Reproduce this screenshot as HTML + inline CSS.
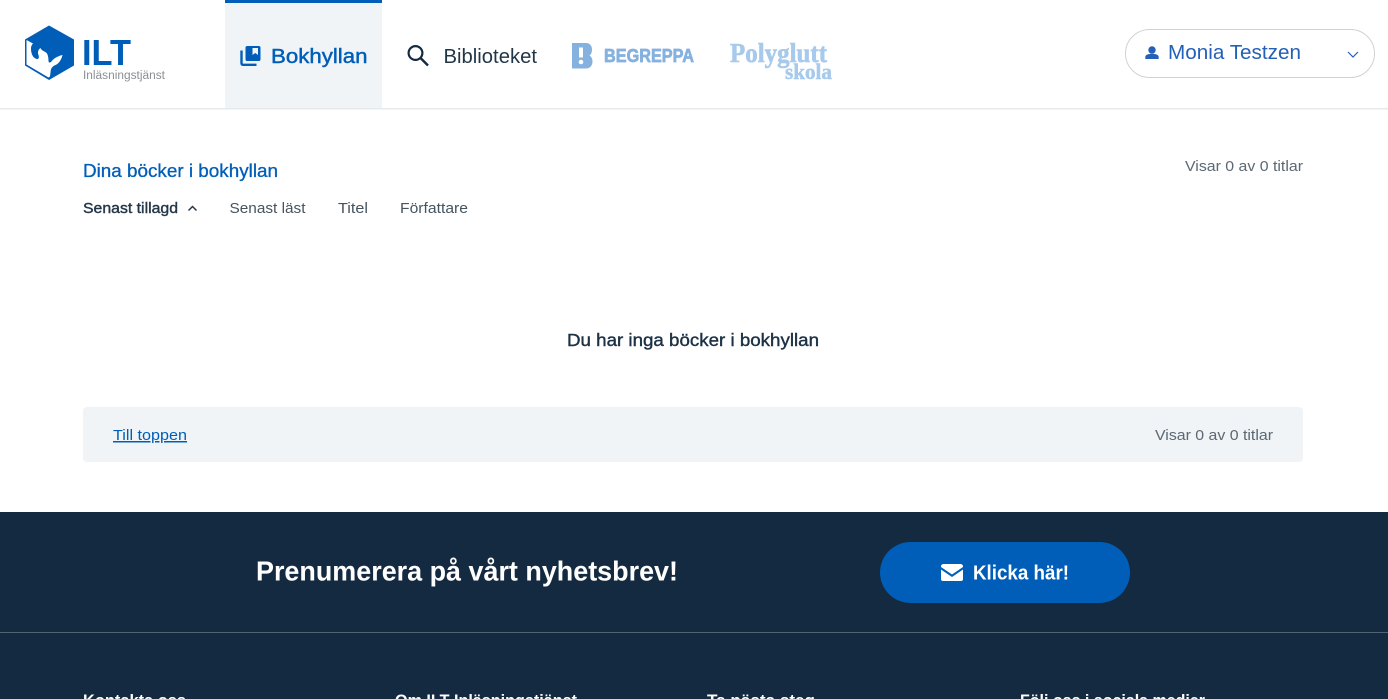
<!DOCTYPE html>
<html lang="sv">
<head>
<meta charset="utf-8">
<title>Bokhyllan</title>
<style>
html,body{margin:0;padding:0;background:#fff;width:1388px;height:699px;overflow:hidden}
svg{display:block;position:absolute;left:0;top:0}
text{font-family:"Liberation Sans",sans-serif}
.b{font-weight:700}
</style>
</head>
<body>
<svg width="1388" height="699" viewBox="0 0 1388 699" xmlns="http://www.w3.org/2000/svg">
<rect width="1388" height="699" fill="#fff"/>

<!-- header -->
<rect x="0" y="108" width="1388" height="1.5" fill="#e6e9ec"/>
<rect x="225" y="0" width="157" height="108" fill="#f0f4f7"/>
<rect x="225" y="0" width="157" height="3" fill="#005eb8"/>

<!-- logo -->
<path d="M49 25.500 74 39.500V65.500L49 80 25 65.500V39.500Z" fill="#005eb8"/>
<path d="M26.500 40 33 43.500 C31.500 45 30.800 47 31 49.500 C31.300 54.500 33.500 58.500 37 59 C39 59.300 39.300 57 38.300 54.500 C37.500 52 38.300 49.500 40.500 48 C41.500 50.500 43.500 50.800 46 52.500 C48 54 48.500 58 48.500 61 C48.500 62.500 49.500 63 51 62 C54 58 58 56 62.500 55 C61.500 59.500 59 63.500 55.500 65 C53 66 51.500 67.500 50.800 70 L50 76.500 L48.500 77.500 L26.500 64.500 Z" fill="#fff"/>
<text x="82" y="65" class="b" font-size="36" fill="#005eb8" textLength="49" lengthAdjust="spacingAndGlyphs">ILT</text>
<text x="83" y="79" font-size="11.500" fill="#8a8f94" textLength="82" lengthAdjust="spacingAndGlyphs">Inläsningstjänst</text>

<!-- bokhyllan -->
<rect x="245.500" y="46" width="15" height="15" rx="1.800" fill="#005eb8"/>
<path d="M252.500 48H258V55L255.250 53L252.500 55Z" fill="#f0f4f7"/>
<path d="M241.500 50.500V63.300A1.500 1.500 0 0 0 243 64.800H256.500" fill="none" stroke="#005eb8" stroke-width="2.400"/>
<text x="271" y="63" font-size="20" fill="#005eb8" stroke="#005eb8" stroke-width=".45" textLength="96.500" lengthAdjust="spacingAndGlyphs">Bokhyllan</text>

<!-- biblioteket -->
<circle cx="415.500" cy="53" r="6.900" fill="none" stroke="#142a40" stroke-width="2.200"/>
<path d="M420.500 58 428 65.500" fill="none" stroke="#142a40" stroke-width="2.400"/>
<text x="443.500" y="63" font-size="20" fill="#233648" textLength="93.500" lengthAdjust="spacingAndGlyphs">Biblioteket</text>

<!-- begreppa -->
<path d="M572 43H586C590 43 592 46 592 49.500C592 52.500 591 54.500 589.500 55.500C591.500 56.800 592.500 59 592.500 61.500C592.500 65.500 590 68.500 586 68.500H572Z" fill="#85b1df"/>
<rect x="579" y="47.500" width="4" height="10" fill="#fff"/>
<circle cx="581" cy="62" r="2.300" fill="#fff"/>
<text x="604" y="62" class="b" font-size="18" fill="#85b1df" stroke="#85b1df" stroke-width=".7" textLength="90" lengthAdjust="spacingAndGlyphs">BEGREPPA</text>

<!-- polyglutt -->
<text x="730" y="62" font-size="27" font-weight="700" fill="#a7caec" stroke="#a7caec" stroke-width=".6" textLength="97" lengthAdjust="spacingAndGlyphs" style="font-family:'Liberation Serif',serif">Polyglutt</text>
<text x="785" y="79" font-size="22" font-weight="700" fill="#a7caec" stroke="#a7caec" stroke-width=".5" textLength="47" lengthAdjust="spacingAndGlyphs" style="font-family:'Liberation Serif',serif">skola</text>

<!-- user pill -->
<rect x="1125.500" y="29.500" width="249" height="48" rx="24" fill="#fff" stroke="#cfd2d4"/>
<circle cx="1152" cy="50" r="3.700" fill="#2560b8"/>
<path d="M1145.300 59V57C1145.300 54.800 1148 53.900 1152 53.900C1156 53.900 1158.700 54.800 1158.700 57V59Z" fill="#2560b8"/>
<text x="1168" y="59" font-size="20" fill="#2560b8" textLength="133" lengthAdjust="spacingAndGlyphs">Monia Testzen</text>
<path d="M1348 52 1353 57 1358 52" fill="none" stroke="#2560b8" stroke-width="1.200"/>

<!-- content -->
<text x="83" y="177" font-size="18" fill="#005eb8" stroke="#005eb8" stroke-width=".3" textLength="195" lengthAdjust="spacingAndGlyphs">Dina böcker i bokhyllan</text>
<text x="1185" y="171" font-size="15" fill="#5c6873" textLength="118" lengthAdjust="spacingAndGlyphs">Visar 0 av 0 titlar</text>

<text x="83" y="213" font-size="15" fill="#233648" stroke="#233648" stroke-width=".4" textLength="95" lengthAdjust="spacingAndGlyphs">Senast tillagd</text>
<path d="M188.500 210.500 192.500 206.500 196.500 210.500" fill="none" stroke="#233648" stroke-width="1.500"/>
<text x="229.500" y="213" font-size="15" fill="#46545f" textLength="76" lengthAdjust="spacingAndGlyphs">Senast läst</text>
<text x="338" y="213" font-size="15" fill="#46545f" textLength="30" lengthAdjust="spacingAndGlyphs">Titel</text>
<text x="400" y="213" font-size="15" fill="#46545f" textLength="68" lengthAdjust="spacingAndGlyphs">Författare</text>

<text x="567" y="346" font-size="17.500" fill="#1c3145" stroke="#1c3145" stroke-width=".4" textLength="252" lengthAdjust="spacingAndGlyphs">Du har inga böcker i bokhyllan</text>

<rect x="83" y="407" width="1220" height="55" rx="4" fill="#f0f4f7"/>
<text x="113" y="440" font-size="15" fill="#005eb8" text-decoration="underline" textLength="74" lengthAdjust="spacingAndGlyphs">Till toppen</text>
<text x="1155" y="440" font-size="15" fill="#5c6873" textLength="118" lengthAdjust="spacingAndGlyphs">Visar 0 av 0 titlar</text>

<!-- footer -->
<rect x="0" y="512" width="1388" height="187" fill="#142a40"/>
<text x="256" y="580.500" class="b" font-size="28" fill="#fff" textLength="422" lengthAdjust="spacingAndGlyphs">Prenumerera på vårt nyhetsbrev!</text>
<rect x="880" y="542" width="250" height="61" rx="30.500" fill="#005eb8"/>
<path d="M941 567A2.500 2.500 0 0 1 943.500 564H960.500A2.500 2.500 0 0 1 963 567L952 574.500Z" fill="#fff"/>
<path d="M941 569.500 952 577 963 569.500V579A2 2 0 0 1 961 581H943A2 2 0 0 1 941 579Z" fill="#fff"/>
<text x="973" y="579.500" class="b" font-size="20" fill="#fff" textLength="96" lengthAdjust="spacingAndGlyphs">Klicka här!</text>
<rect x="0" y="632" width="1388" height="1" fill="#4f6474"/>

<text x="83" y="706" class="b" font-size="17" fill="#fff" textLength="103" lengthAdjust="spacingAndGlyphs">Kontakta oss</text>
<text x="395" y="706" class="b" font-size="17" fill="#fff" textLength="182" lengthAdjust="spacingAndGlyphs">Om ILT Inläsningstjänst</text>
<text x="707" y="706" class="b" font-size="17" fill="#fff" textLength="108" lengthAdjust="spacingAndGlyphs">Ta nästa steg</text>
<text x="1020" y="706" class="b" font-size="17" fill="#fff" textLength="185" lengthAdjust="spacingAndGlyphs">Följ oss i sociala medier</text>
</svg>
</body>
</html>
